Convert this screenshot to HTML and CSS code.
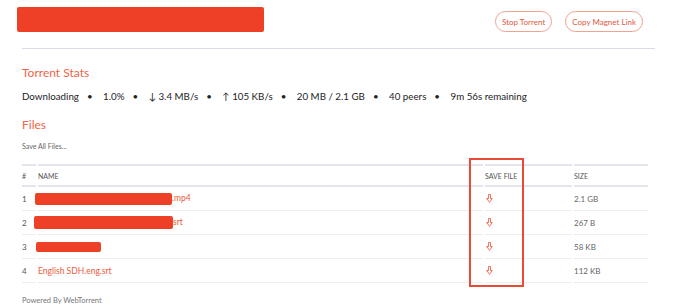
FILE: index.html
```html
<!DOCTYPE html>
<html lang="en">
<head>
    <meta charset="UTF-8">
    <meta name="viewport" content="width=device-width, initial-scale=1.0">
    <title>Torrent</title>
    <link rel="stylesheet" href="styles.css">
</head>
<body>
    <header class="topbar">
        <div class="redacted title-redacted"></div>
        <div class="actions">
            <button type="button" class="pill">Stop Torrent</button>
            <button type="button" class="pill">Copy Magnet Link</button>
        </div>
    </header>
    <hr class="divider">

    <main class="content">
        <h2 class="section-title">Torrent Stats</h2>
        <p class="stats">
            <span>Downloading</span><span class="dot">&bull;</span>
            <span>1.0%</span><span class="dot">&bull;</span>
            <span>&darr; 3.4 MB/s</span><span class="dot">&bull;</span>
            <span>&uarr; 105 KB/s</span><span class="dot">&bull;</span>
            <span>20 MB / 2.1 GB</span><span class="dot">&bull;</span>
            <span>40 peers</span><span class="dot">&bull;</span>
            <span>9m 56s remaining</span>
        </p>

        <h2 class="section-title files-title">Files</h2>
        <a class="save-all" href="#">Save All Files...</a>

        <div class="table-wrap">
            <table class="files">
                <thead>
                    <tr>
                        <th class="col-num">#</th>
                        <th class="col-name">Name</th>
                        <th class="col-save">Save File</th>
                        <th class="col-size">Size</th>
                    </tr>
                </thead>
                <tbody>
                    <tr>
                        <td>1</td>
                        <td class="file-name"><span class="redacted name-redacted" style="width: 137px"></span>.mp4</td>
                        <td><svg class="dl" width="7" height="9" viewBox="0 0 7 9"><path d="M2.5 0.5 H4.5 V4.5 H6.3 L3.5 8.3 L0.7 4.5 H2.5 Z" fill="none" stroke="currentColor" stroke-width="0.9"/></svg></td>
                        <td class="size">2.1 GB</td>
                    </tr>
                    <tr>
                        <td>2</td>
                        <td class="file-name"><span class="redacted name-redacted tall" style="width: 139px"></span>srt</td>
                        <td><svg class="dl" width="7" height="9" viewBox="0 0 7 9"><path d="M2.5 0.5 H4.5 V4.5 H6.3 L3.5 8.3 L0.7 4.5 H2.5 Z" fill="none" stroke="currentColor" stroke-width="0.9"/></svg></td>
                        <td class="size">267 B</td>
                    </tr>
                    <tr>
                        <td>3</td>
                        <td class="file-name"><span class="redacted name-redacted short" style="width: 65px"></span></td>
                        <td><svg class="dl" width="7" height="9" viewBox="0 0 7 9"><path d="M2.5 0.5 H4.5 V4.5 H6.3 L3.5 8.3 L0.7 4.5 H2.5 Z" fill="none" stroke="currentColor" stroke-width="0.9"/></svg></td>
                        <td class="size">58 KB</td>
                    </tr>
                    <tr>
                        <td>4</td>
                        <td class="file-name">English SDH.eng.srt</td>
                        <td><svg class="dl" width="7" height="9" viewBox="0 0 7 9"><path d="M2.5 0.5 H4.5 V4.5 H6.3 L3.5 8.3 L0.7 4.5 H2.5 Z" fill="none" stroke="currentColor" stroke-width="0.9"/></svg></td>
                        <td class="size">112 KB</td>
                    </tr>
                </tbody>
            </table>
            <div class="highlight"></div>
        </div>

        <p class="powered">Powered By WebTorrent</p>
    </main>
</body>
</html>
```

FILE: styles.css
```css
body {
    font-family: Lato, "Liberation Sans", sans-serif;
    margin: 0;
    padding: 0;
    background: #fff;
    color: #222;
}

.redacted {
    display: inline-block;
    background: #ee4026;
    border-radius: 2px;
}

.topbar {
    display: flex;
    justify-content: space-between;
    align-items: flex-start;
    padding: 7px 47px 0 17px;
}

.title-redacted {
    width: 247px;
    height: 25px;
}

.actions {
    display: flex;
    gap: 13px;
    margin-top: 4px;
}

.pill {
    font-family: Lato, "Liberation Sans", sans-serif;
    font-size: 8px;
    color: #e4573d;
    background: #fff;
    border: 1px solid #f0a391;
    border-radius: 11px;
    height: 21px;
    padding: 0 6px;
    cursor: pointer;
}

.divider {
    border: none;
    border-top: 1px solid #dcdce8;
    margin: 16px 35px 0 22px;
}

.content {
    padding: 0 42px 0 22px;
}

.section-title {
    font-size: 12px;
    font-weight: normal;
    color: #ee6446;
    line-height: 16px;
    margin: 16px 0 0;
}

.stats {
    font-size: 9.75px;
    line-height: 14px;
    margin: 8px 0 0;
    color: #222;
}

.dot {
    margin: 0 8px;
}

.files-title {
    margin-top: 14px;
}

.save-all {
    display: block;
    font-size: 7px;
    line-height: 10px;
    color: #666;
    text-decoration: none;
    margin-top: 8px;
}

.table-wrap {
    position: relative;
    margin-top: 13px;
}

table.files {
    width: calc(100% + 4px);
    margin-left: -2px;
    border-collapse: separate;
    border-spacing: 2px 0;
    font-size: 8px;
    color: #555;
}

.files th {
    text-align: left;
    font-weight: normal;
    font-size: 7px;
    text-transform: uppercase;
    color: #555;
    height: 19px;
    padding: 0;
    border-top: 2px solid #e4e4ec;
    border-bottom: 2px solid #e4e4ec;
}

.files td {
    height: 23px;
    padding: 0;
    border-bottom: 1px solid #eeeef2;
    vertical-align: middle;
}

.col-num {
    width: 14px;
}

.col-save {
    width: 87px;
}

.col-size {
    width: 74px;
}

.file-name {
    color: #ee5a3c;
    font-size: 8.5px;
}

.name-redacted {
    height: 12px;
    vertical-align: middle;
    margin-left: -3px;
}

.name-redacted.tall {
    height: 13px;
    margin-left: -4px;
}

.name-redacted.short {
    height: 10px;
    margin-left: -2px;
}

.dl {
    display: block;
    color: #ee6446;
    margin-left: 1px;
}

.size {
    color: #666;
}

.highlight {
    position: absolute;
    left: 447px;
    top: -6px;
    width: 51px;
    height: 125px;
    border: 2px solid #e94b35;
}

.powered {
    font-size: 7.5px;
    line-height: 10px;
    color: #777;
    margin: 13px 0 0;
}
```
